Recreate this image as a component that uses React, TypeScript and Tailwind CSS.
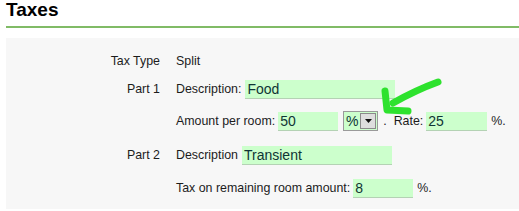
import React from 'react'

const font = { fontFamily: '"Liberation Sans", Arial, sans-serif' }

function Field({ value, w, ml = 'ml-[3px]' }: { value: string; w: string; ml?: string }) {
  return (
    <div
      className={`${w} ${ml} h-[19px] bg-[#ccffcc] border-b border-[#b4d2b4] flex items-center pl-[2px] text-[14px] leading-none text-[#0f3535]`}
    >
      {value}
    </div>
  )
}

function Row({ label, h, children }: { label?: string; h: string; children: React.ReactNode }) {
  return (
    <div className={`grid grid-cols-[154px_1fr] gap-x-[16px] ${h}`}>
      <div className="flex items-center justify-end">{label}</div>
      <div className="flex items-center">{children}</div>
    </div>
  )
}

export default function App() {
  return (
    <div className="relative w-[519px] h-[211px] bg-white overflow-hidden text-[12.4px] text-[#1c1c1c]" style={font}>
      <h1 className="h-[20px] pl-[6px] text-[19px] leading-[20px] font-bold text-black">Taxes</h1>
      <div className="ml-[6px] mt-[6px] h-[2px] bg-[#80bb66]" />
      <div className="ml-[6px] mt-[10px] bg-[#f7f7f7] pt-[9px] pb-[4px]">
        <Row label="Tax Type" h="h-[28px]">
          Split
        </Row>
        <Row label="Part 1" h="h-[28px]">
          Description:
          <Field value="Food" w="w-[150px]" ml="ml-[4px]" />
        </Row>
        <Row h="h-[36px]">
          Amount per room:
          <Field value="50" w="w-[60px]" />
          <div className="ml-[5px] h-[20px] w-[35px] flex border border-[#9a9a9a] bg-[#ccffcc]">
            <span className="flex-1 flex items-center justify-center text-[14px] text-[#0f3535]">%</span>
            <span className="w-[16px] my-[1px] mr-[1px] flex items-center justify-center border border-[#8a8a8a] bg-[#dedede]">
              <svg width="7" height="4" viewBox="0 0 7 4">
                <path d="M0 0h7L3.5 4z" fill="#111" />
              </svg>
            </span>
          </div>
          <span className="ml-[5px]">.</span>
          <span className="ml-[7px]">Rate:</span>
          <Field value="25" w="w-[61px]" ml="ml-[3px]" />
          <span className="ml-[4px]">%.</span>
        </Row>
        <Row label="Part 2" h="h-[32px]">
          Description
          <Field value="Transient" w="w-[150px]" ml="ml-[4px]" />
        </Row>
        <Row h="h-[34px]">
          Tax on remaining room amount:
          <Field value="8" w="w-[60px]" />
          <span className="ml-[4px]">%.</span>
        </Row>
      </div>
      <svg className="absolute left-0 top-0 pointer-events-none" width="519" height="211" viewBox="0 0 519 211">
        <g fill="none" stroke="#2ee22e" strokeWidth="7" strokeLinecap="round" strokeLinejoin="round">
          <path d="M438 82 Q416 90 393 103" />
          <path d="M385 91 L387 110 L408 111" />
        </g>
      </svg>
    </div>
  )
}
